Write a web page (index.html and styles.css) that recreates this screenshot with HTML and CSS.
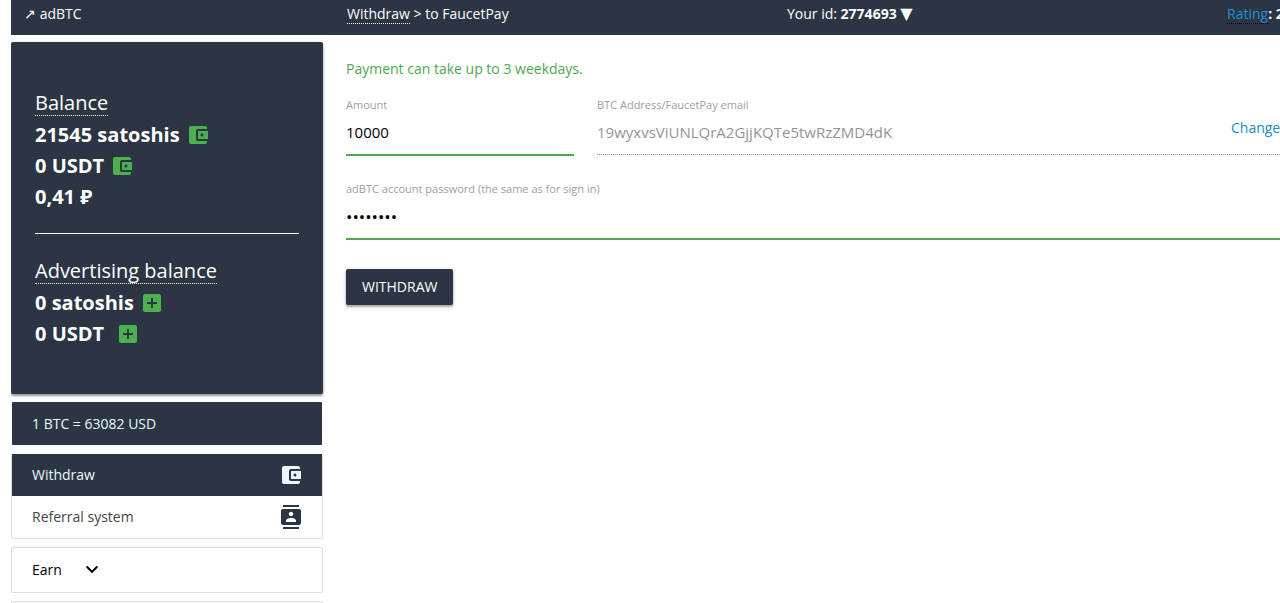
FILE: index.html
```html
<!DOCTYPE html>
<html lang="en">
<head>
    <meta charset="UTF-8">
    <meta name="viewport" content="width=device-width, initial-scale=1.0">
    <title>Withdraw to FaucetPay</title>
    <link rel="stylesheet" href="styles.css">
</head>
<body>
    <!-- icons used more than once -->
    <svg class="sprite" aria-hidden="true">
        <symbol id="wallet" viewBox="0 0 24 24">
            <path d="M21 18v1c0 1.100-.9 2-2 2H5c-1.100 0-2-.9-2-2V5c0-1.100.9-2 2-2h14c1.100 0 2 .9 2 2v1h-9c-1.100 0-2 .9-2 2v8c0 1.100.9 2 2 2h9zm-9-2h10V8H12v8zm4-2.500c-.83 0-1.500-.67-1.500-1.500s.67-1.500 1.500-1.500 1.500.67 1.500 1.500-.67 1.500-1.500 1.500z"/>
        </symbol>
        <symbol id="plus" viewBox="0 0 24 24">
            <path d="M19 3H5c-1.110 0-2 .9-2 2v14c0 1.100.89 2 2 2h14c1.100 0 2-.9 2-2V5c0-1.100-.9-2-2-2zm-2 10h-4v4h-2v-4H7v-2h4V7h2v4h4v2z"/>
        </symbol>
    </svg>

    <header class="topbar">
        <a class="brand" href="#">↗ adBTC</a>
        <div><a class="dotted" href="#">Withdraw</a> &gt; to FaucetPay</div>
        <div>Your id: <b>2774693 <span class="arrow">▼</span></b></div>
        <div><a class="rating" href="#">Rating</a><b>: 2</b></div>
    </header>

    <div class="page">
        <aside class="sidebar">
            <section class="balance">
                <a class="balance-title" href="#">Balance</a>
                <div class="amount">21545 satoshis <a href="#" aria-label="Withdraw satoshis"><svg class="icon"><use href="#wallet"/></svg></a></div>
                <div class="amount">0 USDT <a href="#" aria-label="Withdraw USDT"><svg class="icon"><use href="#wallet"/></svg></a></div>
                <div class="amount">0,41 ₽</div>
                <hr>
                <a class="balance-title" href="#">Advertising balance</a>
                <div class="amount">0 satoshis <a href="#" aria-label="Add satoshis"><svg class="icon"><use href="#plus"/></svg></a></div>
                <div class="amount wide">0 USDT <a href="#" aria-label="Add USDT"><svg class="icon"><use href="#plus"/></svg></a></div>
            </section>

            <div class="rate">1 BTC = 63082 USD</div>

            <nav class="menu">
                <a class="active" href="#">Withdraw <svg class="icon"><use href="#wallet"/></svg></a>
                <a href="#">Referral system
                    <svg class="icon" viewBox="0 0 24 24"><path d="M20 0H4v2h16V0zM4 24h16v-2H4v2zM20 4H4c-1.100 0-2 .9-2 2v12c0 1.100.9 2 2 2h16c1.100 0 2-.9 2-2V6c0-1.100-.9-2-2-2zm-8 2.750c1.240 0 2.250 1.010 2.250 2.250s-1.010 2.250-2.250 2.250S9.750 10.240 9.750 9 10.760 6.750 12 6.750zM17 17H7v-1.500c0-1.670 3.330-2.500 5-2.500s5 .83 5 2.500V17z"/></svg>
                </a>
            </nav>

            <button class="group" type="button">Earn
                <svg class="icon" viewBox="0 0 24 24"><path d="M7.410 7.840L12 12.420l4.590-4.580L18 9.250l-6 6-6-6z"/></svg>
            </button>
            <div class="group"></div>
        </aside>

        <main>
            <p class="notice">Payment can take up to 3 weekdays.</p>
            <form>
                <div class="row">
                    <div class="field">
                        <label for="amount">Amount</label>
                        <input type="text" id="amount" value="10000">
                    </div>
                    <div class="field address">
                        <div>
                            <label for="address">BTC Address/FaucetPay email</label>
                            <input type="text" id="address" value="19wyxvsViUNLQrA2GjjKQTe5twRzZMD4dK" disabled>
                        </div>
                        <a class="change" href="#">Change</a>
                    </div>
                </div>
                <div class="field">
                    <label for="password">adBTC account password (the same as for sign in)</label>
                    <input type="password" id="password" value="password">
                </div>
                <button class="btn" type="submit">WITHDRAW</button>
            </form>
        </main>
    </div>
</body>
</html>
```
FILE: styles.css
```css
* {
    box-sizing: border-box;
}

body {
    margin: 0 0 0 11px;
    font-family: "Open Sans", "Noto Sans", sans-serif;
    font-size: 14px;
    line-height: 22px;
    color: #111;
    background-color: #fff;
    overflow: hidden;
}

a {
    color: inherit;
    text-decoration: none;
}

.sprite {
    display: none;
}

.icon {
    width: 24px;
    height: 24px;
    fill: currentColor;
}

.topbar {
    display: grid;
    grid-template-columns: 323px 1fr 1fr 53px;
    height: 35px;
    padding: 3px 0 0 13px;
    background-color: #2c3543;
    color: #fff;
    white-space: nowrap;
}

.dotted {
    border-bottom: 1px dotted #fff;
}

.arrow {
    font-family: "DejaVu Sans", sans-serif;
    font-size: 16px;
    line-height: 16px;
}

.rating {
    color: #2490d8;
    border-bottom: 1px dotted #000;
}

.page {
    display: flex;
    gap: 23px;
    padding-top: 7px;
}

.sidebar {
    flex: 0 0 312px;
}

.balance {
    padding: 45px 24px;
    border-radius: 2px;
    background-color: #2c3543;
    color: #fff;
    font-size: 20px;
    box-shadow: 0 2px 2px rgba(0, 0, 0, 0.3), 0 1px 4px rgba(0, 0, 0, 0.2);
}

.balance-title {
    display: block;
    width: fit-content;
    margin: 3px 0;
    line-height: 25px;
    border-bottom: 1px dotted #fff;
}

.amount {
    display: flex;
    align-items: center;
    gap: 6px;
    height: 31px;
    font-weight: bold;
}

.amount a {
    display: flex;
    color: #4caf50;
}

.amount.wide {
    gap: 12px;
}

.balance hr {
    height: 1px;
    margin: 21px 0 24px;
    border: 0;
    background-color: #fff;
}

.rate {
    margin: 8px 1px 9px;
    padding: 11px 20px 10px;
    border-radius: 1px;
    background-color: #2c3543;
    color: #e8fbfb;
}

.menu {
    border: 1px solid #ddd;
    border-top: 0;
    border-radius: 2px;
}

.menu a {
    display: flex;
    justify-content: space-between;
    align-items: center;
    height: 42px;
    padding: 0 19px 0 20px;
    color: #444;
}

.menu .icon {
    color: #2c3543;
}

.menu .active,
.menu .active .icon {
    color: #eafafa;
}

.menu .active {
    background-color: #2c3543;
}

.group {
    display: flex;
    align-items: center;
    gap: 18px;
    width: 100%;
    height: 46px;
    margin: 8px 0;
    padding: 0 20px;
    border: 1px solid #ddd;
    border-radius: 2px;
    background-color: #fff;
    font: inherit;
    color: #000;
}

main {
    flex: 1;
    min-width: 0;
    padding-top: 16px;
}

.notice {
    margin: 0 0 17px;
    color: #4ca854;
}

.row {
    display: grid;
    grid-template-columns: 228px 1fr;
    gap: 23px;
    margin-bottom: 25px;
}

.field label {
    display: block;
    font-size: 11px;
    line-height: 16px;
    color: #9e9e9e;
}

.field input {
    display: block;
    width: 100%;
    height: 43px;
    padding: 0 0 3px;
    border: 0;
    border-bottom: 2px solid #4ca854;
    outline: 0;
    background: none;
    font: inherit;
    font-size: 15px;
    color: #000;
}

.address {
    display: grid;
    grid-template-columns: 1fr 49px;
    height: 58px;
    border-bottom: 1px dotted #888;
}

.address input {
    padding-bottom: 5px;
    border-bottom: 0;
    color: #949494;
}

.field input[type="password"] {
    font-size: 17px;
}

.change {
    padding-top: 20px;
    color: #208dcc;
    white-space: nowrap;
}

.btn {
    height: 36px;
    margin-top: 29px;
    padding: 0 16px;
    border: 0;
    border-radius: 2px;
    background-color: #2c3543;
    color: #fff;
    font: inherit;
    box-shadow: 0 2px 2px rgba(0, 0, 0, 0.25), 0 1px 4px rgba(0, 0, 0, 0.2);
}
```
